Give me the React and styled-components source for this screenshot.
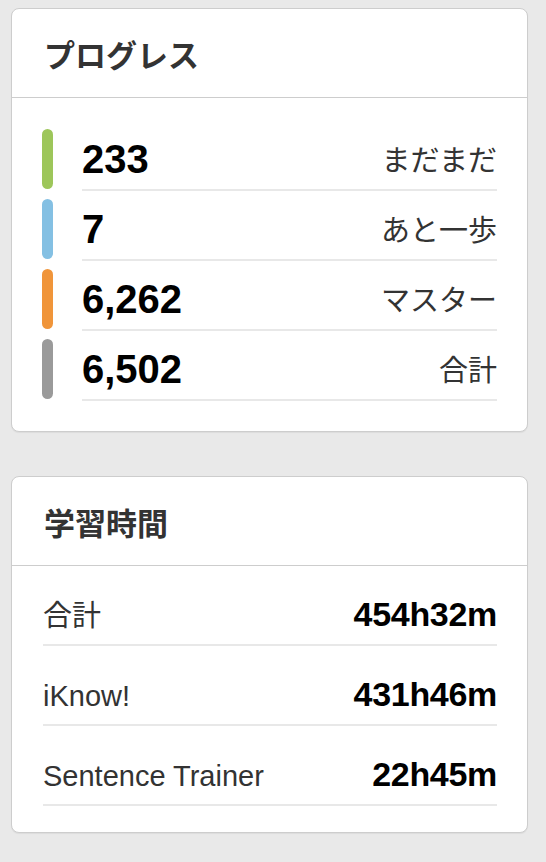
import React from 'react'
import styled, { createGlobalStyle } from 'styled-components'

const GlobalStyle = createGlobalStyle`
  body {
    margin: 0;
    background: #e9e9e9;
    font-family: "Liberation Sans", "Noto Sans CJK JP", sans-serif;
    color: #333;
  }
`

const progress = [
  { count: '233', label: 'まだまだ', color: '#9dc65a' },
  { count: '7', label: 'あと一歩', color: '#84c0e3' },
  { count: '6,262', label: 'マスター', color: '#f0953a' },
  { count: '6,502', label: '合計', color: '#9a9a9a' },
]

const studyTime = [
  { label: '合計', h: '454', m: '32' },
  { label: 'iKnow!', h: '431', m: '46' },
  { label: 'Sentence Trainer', h: '22', m: '45' },
]

const App = () => {
  return (
    <Page>
      <GlobalStyle />
      <Card>
        <CardHeader>プログレス</CardHeader>
        <ProgressBody>
          {progress.map((p) => (
            <ProgressRow key={p.label}>
              <Bar color={p.color} />
              <ProgressContent>
                <Count>{p.count}</Count>
                <Label>{p.label}</Label>
              </ProgressContent>
            </ProgressRow>
          ))}
        </ProgressBody>
      </Card>

      <Card>
        <CardHeader>学習時間</CardHeader>
        <TimeBody>
          {studyTime.map((t) => (
            <TimeRow key={t.label}>
              <Label>{t.label}</Label>
              <TimeValue>
                {t.h}h{t.m}m
              </TimeValue>
            </TimeRow>
          ))}
        </TimeBody>
      </Card>
    </Page>
  )
}

const Page = styled.div`
  display: flex;
  flex-direction: column;
  gap: 44px;
  padding: 8px 18px 30px 11px;
`

const Card = styled.section`
  background: #fff;
  border: 1px solid #cdcdcd;
  border-radius: 8px;
  box-shadow: 0 1px 1px rgba(0, 0, 0, 0.06);
`

const CardHeader = styled.h2`
  margin: 0;
  height: 88px;
  display: flex;
  align-items: center;
  padding: 0 32px;
  font-size: 31px;
  font-weight: bold;
  color: #333;
  border-bottom: 1px solid #cdcdcd;
`

const ProgressBody = styled.div`
  display: flex;
  flex-direction: column;
  gap: 8px;
  padding: 31px 30px 30px 30px;
`

const ProgressRow = styled.div`
  display: flex;
  gap: 29px;
`

const Bar = styled.div`
  width: 11px;
  height: 60px;
  border-radius: 6px;
  background: ${(p) => p.color};
  flex-shrink: 0;
`

const ProgressContent = styled.div`
  flex: 1;
  display: flex;
  align-items: center;
  justify-content: space-between;
  height: 60px;
  border-bottom: 2px solid #e8e8e8;
`

const Count = styled.span`
  font-size: 40px;
  font-weight: bold;
  color: #000;
`

const Label = styled.span`
  font-size: 29px;
  line-height: 32px;
  padding-top: 4px;
  color: #333;
`

const TimeBody = styled.div`
  display: flex;
  flex-direction: column;
  padding: 0 30px 26px 31px;
`

const TimeRow = styled.div`
  display: flex;
  align-items: center;
  justify-content: space-between;
  height: 32px;
  padding: 32px 0 14px;
  border-bottom: 2px solid #e8e8e8;
`

const TimeValue = styled.span`
  font-size: 34px;
  line-height: 32px;
  font-weight: bold;
  color: #000;
  letter-spacing: -0.3px;
`

export default App
